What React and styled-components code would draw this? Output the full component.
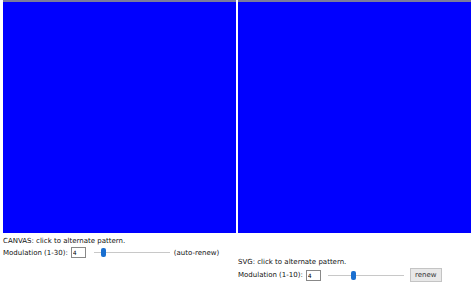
import React, { useState } from "react";
import styled, { createGlobalStyle } from "styled-components";

const Global = createGlobalStyle`
  body {
    margin: 0;
    background: #fff;
    font-family: "DejaVu Sans", Verdana, sans-serif;
    font-size: 7px;
    color: #111;
  }
`;

const Page = styled.div`
  padding-left: 3px;
`;

const Panels = styled.div`
  display: flex;
  gap: 2px;
`;

const Pad = styled.div`
  width: 233px;
  height: 231px;
  background: #0000ff;
  border-top: 2px solid #7c7c9c;
  cursor: pointer;
`;

const Controls = styled.div`
  display: flex;
  align-items: flex-start;
`;

const Block = styled.div`
  width: ${({ w }) => w}px;
  padding-top: ${({ top }) => top}px;
  display: flex;
  flex-direction: column;
  gap: 1px;
`;

const Line = styled.div`
  display: flex;
  align-items: center;
  height: ${({ h }) => h || 10}px;
  white-space: nowrap;
`;

const NumBox = styled.input`
  width: 15px;
  height: 11px;
  box-sizing: border-box;
  margin: 0 0 0 3px;
  padding: 0 1px;
  border: 1px solid #888;
  font: inherit;
  font-size: 6px;
`;

const Slider = styled.input`
  -webkit-appearance: none;
  appearance: none;
  width: 76px;
  height: 10px;
  margin: 0 ${({ mr }) => mr}px 0 ${({ ml }) => ml}px;
  background: transparent;
  &::-webkit-slider-runnable-track {
    height: 1px;
    background: #c8c8c8;
  }
  &::-webkit-slider-thumb {
    -webkit-appearance: none;
    width: 5px;
    height: 9px;
    margin-top: -4px;
    border-radius: 2px;
    background: #1a6fd0;
  }
`;

const Renew = styled.button`
  margin-left: 6px;
  width: 32px;
  height: 14px;
  padding: 0;
  border: 1px solid #c4c4c4;
  background: #e8e8e8;
  font: inherit;
  color: #333;
`;

export default function App() {
  const [a, setA] = useState(4);
  const [b, setB] = useState(4);
  return (
    <Page>
      <Global />
      <Panels>
        <Pad />
        <Pad />
      </Panels>
      <Controls>
        <Block w={235} top={3}>
          <Line>CANVAS: click to alternate pattern.</Line>
          <Line h={11}>
            Modulation (1-30):
            <NumBox value={a} onChange={(e) => setA(e.target.value)} />
            <Slider type="range" min="1" max="30" value={a} ml={8} mr={4} onChange={(e) => setA(e.target.value)} />
            (auto-renew)
          </Line>
        </Block>
        <Block w={236} top={24}>
          <Line>SVG: click to alternate pattern.</Line>
          <Line h={14}>
            Modulation (1-10):
            <NumBox value={b} onChange={(e) => setB(e.target.value)} />
            <Slider type="range" min="1" max="10" value={b} ml={7} mr={0} onChange={(e) => setB(e.target.value)} />
            <Renew>renew</Renew>
          </Line>
        </Block>
      </Controls>
    </Page>
  );
}
